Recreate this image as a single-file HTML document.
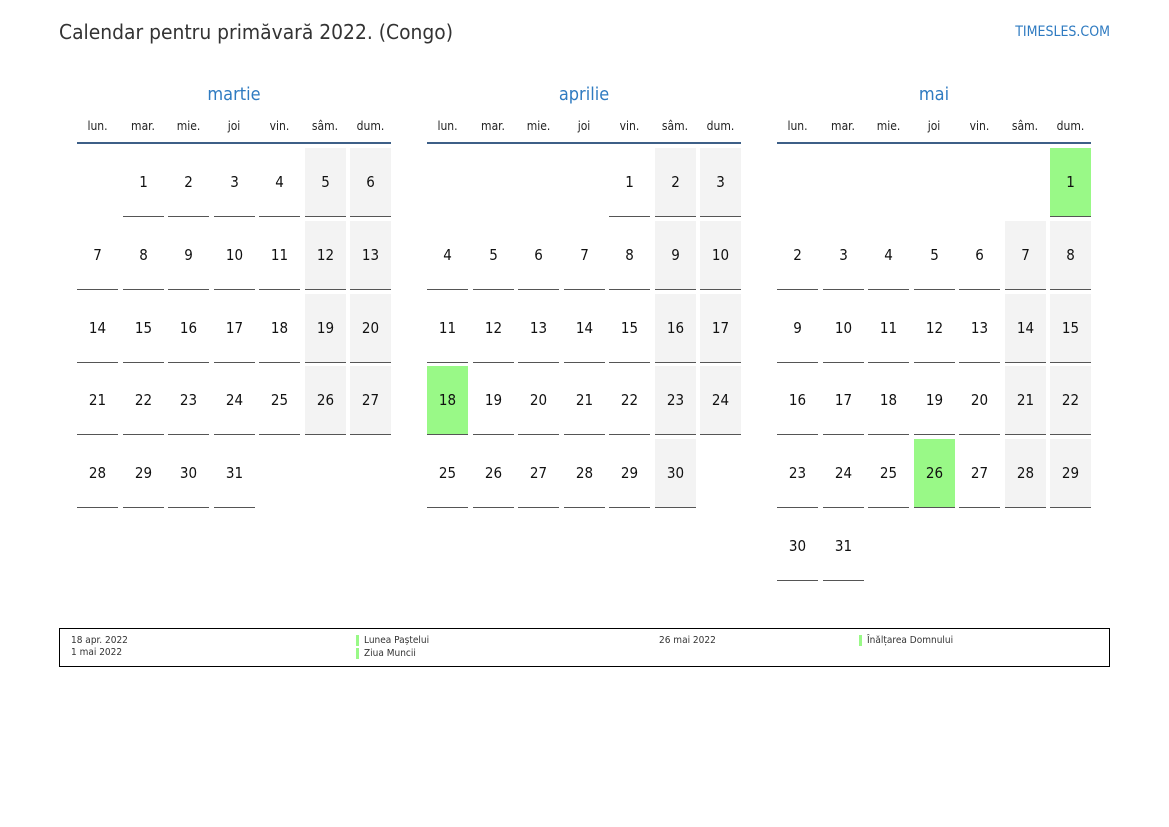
<!DOCTYPE html><html><head><meta charset="utf-8"><style>
body{margin:0;width:1169px;height:827px;background:#fff;font-family:"DejaVu Sans Condensed","DejaVu Sans","Liberation Sans",sans-serif;position:relative;overflow:hidden}
.a{position:absolute}
.t{left:59px;top:20px;font-size:20.8px;color:#333}
.s{right:59px;top:24px;font-size:14px;color:#2f7bc1}
.m{font-size:18px;color:#2f7bc1;width:314px;text-align:center;top:84px}
.w{font-size:12px;color:#222;width:41px;text-align:center;top:119px}
.hl{height:2px;background:#3d5f87;width:314px;top:142px}
.c{width:41px;height:68px;border-bottom:1px solid #555;font-size:15px;color:#111;text-align:center;line-height:68px}
.g{background:#f3f3f3}.h{background:#99f987}
.lg{left:59px;top:628px;width:1049px;height:37px;border:1px solid #000;font-size:10px;color:#333}
.lg div{position:absolute;line-height:12px}
.b{border-left:3px solid #99f987;padding-left:5px;height:11px}
</style></head><body>
<div class="a t">Calendar pentru primăvară 2022. (Congo)</div>
<div class="a s">TIMESLES.COM</div>
<div id="cal"></div>
<div class="a lg">
<div style="left:11px;top:6px">18 apr. 2022<br>1 mai 2022</div>
<div class="b" style="left:296px;top:6px">Lunea Paștelui</div>
<div class="b" style="left:296px;top:19px">Ziua Muncii</div>
<div style="left:599px;top:6px">26 mai 2022</div>
<div class="b" style="left:799px;top:6px">Înălțarea Domnului</div>
</div>
<script>
var months=[["martie",1,31,[]],["aprilie",4,30,[18]],["mai",6,31,[1,26]]];
var wd=["lun.","mar.","mie.","joi","vin.","sâm.","dum."];
var tops=[148,221,294,366,439,512];var h="";
months.forEach(function(m,k){var L=77+350*k;
h+='<div class="a m" style="left:'+L+'px">'+m[0]+'</div><div class="a hl" style="left:'+L+'px"></div>';
wd.forEach(function(w,i){h+='<div class="a w" style="left:'+(L+i*45.5)+'px">'+w+'</div>';});
var col=m[1],row=0;
for(var d=1;d<=m[2];d++){var cls="c";if(m[3].indexOf(d)>=0)cls+=" h";else if(col>=5)cls+=" g";
h+='<div class="a '+cls+'" style="left:'+Math.round(L+col*45.5)+'px;top:'+tops[row]+'px">'+d+'</div>';
col++;if(col==7){col=0;row++;}}
});
document.getElementById("cal").innerHTML=h;
</script>
</body></html>
